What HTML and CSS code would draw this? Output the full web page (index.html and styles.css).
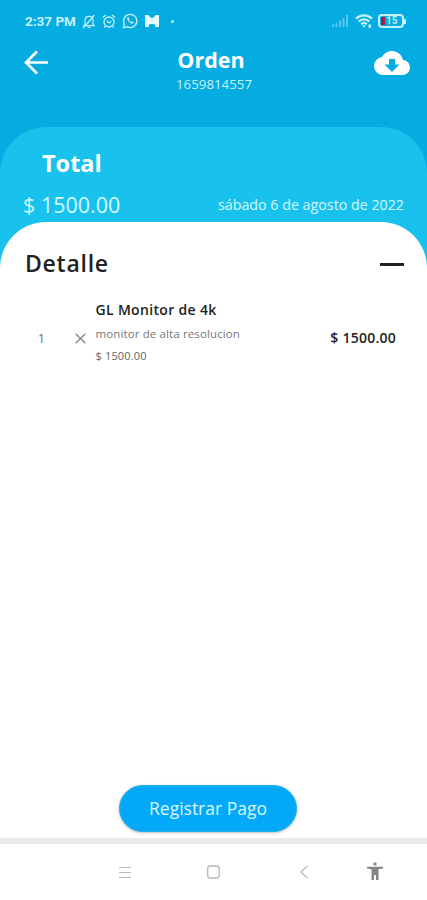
FILE: index.html
```html
<!DOCTYPE html>
<html lang="es">
<head>
<meta charset="utf-8">
<meta name="viewport" content="width=device-width, initial-scale=1">
<title>Orden</title>
<link rel="stylesheet" href="styles.css">
</head>
<body>
<div class="screen">
  <div class="status">
    <span class="clock">2:37 PM</span>
    <svg class="s-bell" width="14" height="15" viewBox="0 0 14 15" fill="none" stroke="currentColor" stroke-width="1.2"><path d="M3 10.500V6.500C3 4 4.600 2.400 7 2.400S11 4 11 6.500v4l1.200 1.200H1.800zM5.600 13.300h2.800M12.500 1 1.300 14"/></svg>
    <svg class="s-alarm" width="14" height="15" viewBox="0 0 14 15" fill="none" stroke="currentColor" stroke-width="1.300"><circle cx="7" cy="8" r="5"/><path d="M.8 3.500 4 1M13.200 3.500 10 1M4.800 7 7 9l2.300-1.700M3.400 12.200 2.200 13.600M10.600 12.200l1.200 1.400"/></svg>
    <svg class="s-chat" width="16" height="16" viewBox="0 0 16 16" fill="none" stroke="currentColor" stroke-width="1.400"><path d="M1.400 14.600 2.400 11A6.600 6.600 0 1 1 5 13.700z"/><path d="M5.400 4.600c-1 2.600 2.400 6.500 5.600 6.200l.7-1.500-1.800-1-1 .8C7.900 8.700 7.200 7.900 6.900 7l.7-.8-.8-1.800z" fill="currentColor" stroke="none"/></svg>
    <svg class="s-mail" width="14" height="12" viewBox="0 0 14 12" fill="currentColor"><path d="M0 0h3.800v12H0zM10.200 0H14v12h-3.800zM3.800 1 7 3.300 10.200 1v8.500L7 9 3.800 9.500z"/></svg>
    <span class="dot"></span>
    <svg class="s-signal" width="17" height="12" viewBox="0 0 17 12" fill="currentColor"><path d="M0 9.500h2V12H0zM3.500 8h2v4h-2zM7 5.500h2V12H7zM10.500 3h2v9h-2zM14 0h2v12h-2z"/></svg>
    <svg class="s-wifi" width="18" height="14" viewBox="0 0 18 14" fill="none" stroke="currentColor" stroke-width="2.300"><path d="M1 4.600C5.500.3 12.500.3 17 4.600M3.600 7.500c3-2.900 7.800-2.900 10.800 0M6.200 10.200c1.600-1.500 4-1.500 5.600 0"/><path d="M9 13.500 7 11.300h4zM13.500 10.500H16V14h-2.500z" fill="currentColor" stroke="none"/></svg>
    <span class="battery"><span class="level"></span><span class="pct">15</span></span>
    <span class="cap"></span>
  </div>

  <header class="bar">
    <svg class="back" width="25" height="25" viewBox="0 0 25 25" fill="none" stroke="#fff" stroke-width="2.700"><path d="M24 12.500H2.500M13 1.500l-11 11 11 11"/></svg>
    <div class="heading">
      <h1>Orden</h1>
      <p>1659814557</p>
    </div>
    <svg class="cloud" width="36" height="24" viewBox="0 0 24 16"><path fill="#fff" d="M19.350 6.040A7.490 7.490 0 0 0 12 0C9.110 0 6.600 1.640 5.350 4.040A5.994 5.994 0 0 0 0 10c0 3.310 2.690 6 6 6h13c2.760 0 5-2.240 5-5 0-2.640-2.050-4.780-4.650-4.960z"/><path fill="#04ace1" d="M10 5.300h4V9h3l-5 5-5-5h3z"/></svg>
  </header>

  <main class="total">
    <h2>Total</h2>
    <div class="summary">
      <span class="amount">$ 1500.00</span>
      <span class="date">sábado 6 de agosto de 2022</span>
    </div>
    <section class="detail">
      <div class="detail-head">
        <h2>Detalle</h2>
        <span class="minus"></span>
      </div>
      <div class="item">
        <span class="qty">1</span>
        <svg class="times" width="11" height="11" viewBox="0 0 11 11" stroke="#888" stroke-width="1.400"><path d="M.7.7l9.600 9.600M10.300.7.7 10.300"/></svg>
        <div class="info">
          <h3>GL Monitor de 4k</h3>
          <p class="desc">monitor de alta resolucion</p>
          <p class="unit">$ 1500.00</p>
        </div>
        <span class="price">$ 1500.00</span>
      </div>
      <button class="pay" type="button">Registrar Pago</button>
    </section>
  </main>

  <nav class="nav">
    <svg width="12" height="13" viewBox="0 0 12 13" stroke="#b8b8b8" stroke-width="1.200"><path d="M0 1.500h12M0 6.500h12M0 11.500h12"/></svg>
    <svg width="13" height="14" viewBox="0 0 13 14" fill="none" stroke="#b8b8b8" stroke-width="1.300"><rect x=".7" y="1" width="11.600" height="12" rx="2.500"/></svg>
    <svg width="8" height="14" viewBox="0 0 8 14" fill="none" stroke="#b8b8b8" stroke-width="1.300"><path d="M7.300 1 1 7l6.300 6"/></svg>
    <svg class="person" width="16" height="18" viewBox="0 0 16 18" fill="#858585"><circle cx="8" cy="1.900" r="1.700"/><path d="M0 4.800h16v1.800l-4.500.7V18H9v-5H7v5H4.500V7.300L0 6.600z"/></svg>
  </nav>
</div>
</body>
</html>
```

FILE: styles.css
```css
* { box-sizing: border-box; }
body, h1, h2, h3, p { margin: 0; }
body { font-family: "Open Sans", "Noto Sans", sans-serif; }

.screen {
  width: 427px;
  height: 900px;
  display: flex;
  flex-direction: column;
  overflow: hidden;
  white-space: nowrap;
  background: #04ace1;
}

.status {
  height: 42px;
  padding: 0 21px 0 25px;
  display: flex;
  align-items: center;
  color: #c4f0fc;
}
.clock {
  width: 57px;
  font: 700 13.500px/20px Roboto, sans-serif;
}
.s-alarm { margin-left: 6px; }
.s-chat { margin-left: 6px; }
.s-mail { margin-left: 7px; margin-bottom: 1px; color: #e6faff; }
.dot {
  width: 3px;
  height: 3px;
  margin-left: 12px;
  border-radius: 50%;
  background: currentColor;
}
.s-signal { margin-left: auto; color: #58c9ec; }
.s-wifi { margin-left: 6px; }
.battery {
  width: 26px;
  height: 14px;
  margin-left: 5px;
  padding: 0 1px;
  display: flex;
  align-items: center;
  border: 2px solid #c4f0fc;
  border-radius: 4px;
}
.level { width: 4px; height: 8px; background: #a91d3b; }
.pct { margin-left: 1px; font: 700 10px/10px Roboto, sans-serif; }
.cap { width: 2px; height: 5px; background: #c4f0fc; }

.bar {
  height: 85px;
  padding: 8px 17px 0 24px;
  display: grid;
  grid-template-columns: 36px 1fr 36px;
  align-items: start;
  color: #fff;
}
.heading { text-align: center; padding-right: 12px; }
.heading h1 { font-size: 21.500px; line-height: 20px; font-weight: 700; }
.heading p { margin-top: 5px; padding-left: 6px; font-size: 13.300px; line-height: 18px; color: #c8f1fc; }
.cloud { margin-top: 1px; }

.total {
  flex: 1;
  display: flex;
  flex-direction: column;
  padding-top: 20px;
  border-radius: 46px 46px 0 0;
  background: #18c2ed;
}
.total > h2 {
  padding-left: 42px;
  font-size: 23.500px;
  line-height: 32px;
  font-weight: 700;
  color: #fff;
}
.summary {
  height: 43px;
  padding: 9px 23px 0;
  display: flex;
  justify-content: space-between;
  color: #d5f8ff;
}
.amount { font-size: 21.500px; line-height: 34px; }
.date { font-size: 14.250px; line-height: 34px; }

.detail {
  flex: 1;
  display: flex;
  flex-direction: column;
  padding: 25px 0 6px;
  border-radius: 46px 46px 0 0;
  background: #fff;
  color: #222;
}
.detail-head {
  height: 32px;
  padding: 0 23px 0 25px;
  display: flex;
  align-items: center;
  justify-content: space-between;
}
.detail-head h2 { font-size: 23px; line-height: 32px; font-weight: 600; letter-spacing: .75px; }
.minus { width: 24px; height: 3px; margin-top: 3px; background: #222; }

.item {
  margin-top: 20px;
  padding: 0 31px 0 38px;
  display: grid;
  grid-template-columns: 37px 20.500px 1fr auto;
  align-items: center;
}
.qty { font-size: 12px; padding-top: 11px; color: #666; }
.times { margin-top: 11px; }
.info h3 { font-size: 14px; line-height: 22px; font-weight: 600; letter-spacing: .33px; }
.desc { margin-top: 3px; font-size: 11.500px; line-height: 20px; letter-spacing: .12px; color: #777; }
.unit { margin-top: 2px; font-size: 11px; line-height: 20px; letter-spacing: .15px; color: #666; }
.price { padding-top: 10px; font-size: 14px; font-weight: 600; letter-spacing: .25px; }

.pay {
  width: 178px;
  height: 47px;
  margin: auto 0 0 119px;
  padding: 0 0 2px;
  border: 1px solid #1cb0e8;
  border-radius: 24px;
  background: #03a9f8;
  box-shadow: 0 1px 3px rgba(0, 0, 0, .25);
  font: 400 17.500px/24px "Open Sans", sans-serif;
  color: #d9f6ff;
}

.nav {
  height: 62px;
  padding-left: 80px;
  display: grid;
  grid-template-columns: 89px 89px 91px 51px;
  align-items: center;
  justify-items: center;
  border-top: 6px solid #ebebeb;
  background: #fff;
}
.nav .person { margin-bottom: 2px; }
```
